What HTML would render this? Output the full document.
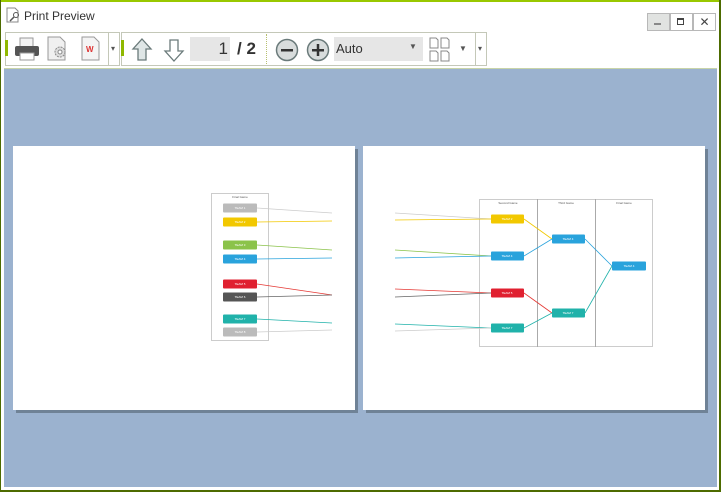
<!DOCTYPE html>
<html><head><style>
body{margin:0;width:721px;height:492px;overflow:hidden;background:#fff;font-family:"Liberation Sans",sans-serif;position:relative}
.abs{position:absolute}
</style></head><body>
<div class="abs" style="left:0;top:0;width:721px;height:2px;background:#99c800"></div>
<div class="abs" style="left:0;top:0;width:1px;height:492px;background:#4d6b00"></div>
<div class="abs" style="left:719px;top:0;width:2px;height:492px;background:#4d6b00"></div>
<div class="abs" style="left:0;top:490px;width:721px;height:2px;background:#4d6b00"></div>
<!-- title -->
<svg class="abs" style="left:6px;top:7px" width="14" height="16"><path d="M1 1h8l3 3v11H1z" fill="#fff" stroke="#888"/><circle cx="10" cy="8" r="2.5" fill="none" stroke="#555"/><path d="M8 10l-4 4" stroke="#555" stroke-width="1.5"/></svg>
<div class="abs" style="left:24px;top:9px;font-size:12px;color:#333">Print Preview</div>
<!-- window buttons -->
<div class="abs" style="left:647px;top:13px;width:21px;height:16px;background:#e1e3e1;border:1px solid #b8b8b8"></div>
<div class="abs" style="left:654px;top:23px;width:7px;height:2px;background:#888"></div>
<div class="abs" style="left:670px;top:13px;width:21px;height:16px;background:#fff;border:1px solid #b8b8b8"></div>
<div class="abs" style="left:677px;top:18px;width:5px;height:4px;border:1px solid #444;border-top-width:2px"></div>
<div class="abs" style="left:693px;top:13px;width:21px;height:16px;background:#fff;border:1px solid #b8b8b8;font-size:12px;line-height:16px;text-align:center;color:#444">✕</div>
<!-- toolbar groups -->
<div class="abs" style="left:5px;top:32px;width:113px;height:32px;border:1px solid #c4c8b8"></div>
<div class="abs" style="left:108px;top:32px;width:1px;height:34px;background:#c4c8b8"></div>
<div class="abs" style="left:121px;top:32px;width:364px;height:32px;border:1px solid #c4c8b8"></div>
<div class="abs" style="left:475px;top:32px;width:1px;height:34px;background:#c4c8b8"></div>
<div class="abs" style="left:5px;top:40px;width:3px;height:16px;background:#8fb800"></div>
<div class="abs" style="left:121px;top:40px;width:3px;height:16px;background:#8fb800"></div>
<div class="abs" style="left:111px;top:44px;font-size:8px;color:#555">▾</div>
<div class="abs" style="left:478px;top:44px;font-size:8px;color:#555">▾</div>
<!-- printer -->
<svg class="abs" style="left:13px;top:36px" width="28" height="26"><rect x="7" y="2" width="13" height="9" fill="#f4f4f4" stroke="#999"/><rect x="2" y="10" width="24" height="10" rx="2" fill="#555"/><rect x="7" y="17" width="14" height="7" fill="#fff" stroke="#999"/></svg>
<svg class="abs" style="left:46px;top:36px" width="24" height="26"><path d="M2 1h12l5 5v18H2z" fill="#f0f0f0" stroke="#999"/><circle cx="14" cy="16" r="5" fill="#ddd" stroke="#888" stroke-dasharray="2 1"/><circle cx="14" cy="16" r="2" fill="#fff" stroke="#888"/></svg>
<svg class="abs" style="left:81px;top:36px" width="20" height="26"><path d="M1 1h12l5 5v18H1z" fill="#f4f4f4" stroke="#999"/><text x="5" y="16" font-size="8" font-weight="bold" fill="#d33" font-family="Liberation Sans">W</text></svg>
<!-- arrows -->
<svg class="abs" style="left:131px;top:38px" width="22" height="24"><path d="M11 1L20 11h-5v11H7V11H2z" fill="#dfe6e6" stroke="#6a7a7a" stroke-width="1.3"/></svg>
<svg class="abs" style="left:163px;top:38px" width="22" height="24"><path d="M11 23L20 13h-5V2H7v11H2z" fill="#fff" stroke="#6a7a7a" stroke-width="1.3"/></svg>
<div class="abs" style="left:190px;top:37px;width:40px;height:24px;background:#e6e6e6"></div>
<div class="abs" style="left:190px;top:37px;width:38px;height:24px;font-size:17px;line-height:24px;text-align:right;color:#333">1</div>
<div class="abs" style="left:237px;top:37px;font-size:17px;line-height:24px;color:#333;font-weight:bold">/ 2</div>
<div class="abs" style="left:266px;top:34px;width:0;height:30px;border-left:1px dotted #b8c070"></div>
<svg class="abs" style="left:275px;top:38px" width="24" height="24"><circle cx="12" cy="12" r="10.5" fill="#d8dcdc" stroke="#6a7a7a" stroke-width="1.5"/><rect x="6" y="11" width="12" height="2.5" fill="#333"/></svg>
<svg class="abs" style="left:306px;top:38px" width="24" height="24"><circle cx="12" cy="12" r="10.5" fill="#d8dcdc" stroke="#6a7a7a" stroke-width="1.5"/><rect x="6" y="11" width="12" height="2.5" fill="#333"/><rect x="10.75" y="6" width="2.5" height="12" fill="#333"/></svg>
<div class="abs" style="left:334px;top:37px;width:89px;height:24px;background:#e6e6e6;font-size:13px;line-height:24px;color:#333;text-indent:2px">Auto</div>
<div class="abs" style="left:409px;top:42px;font-size:8px;color:#555">▼</div>
<svg class="abs" style="left:429px;top:37px" width="22" height="25"><g fill="#fff" stroke="#888"><path d="M1 1h6l2 2v8H1z"/><path d="M12 1h6l2 2v8h-8z"/><path d="M1 14h6l2 2v8H1z"/><path d="M12 14h6l2 2v8h-8z"/></g></svg>
<div class="abs" style="left:459px;top:44px;font-size:8px;color:#555">▼</div>
<!-- preview area -->
<div class="abs" style="left:4px;top:68px;width:713px;height:1px;background:#c8d4a8"></div>
<div class="abs" style="left:4px;top:69px;width:713px;height:418px;background:#9bb2cf"></div>
<div class="abs" style="left:16px;top:149px;width:342px;height:264px;background:#6f8296"></div>
<div class="abs" style="left:366px;top:149px;width:342px;height:264px;background:#6f8296"></div>
<svg class="abs" style="left:0;top:0" width="721" height="492" font-family="Liberation Sans">
<rect x="13" y="146" width="342" height="264" fill="#fff"/>
<rect x="363" y="146" width="342" height="264" fill="#fff"/>
<rect x="211.5" y="193.5" width="57" height="147" fill="none" stroke="#ccc"/>
<text x="240" y="198" font-size="3" text-anchor="middle" fill="#555">Final Game</text>
<g stroke-width="0.8" fill="none">
<path d="M257 208L332 213" stroke="#ccc"/><path d="M257 222L332 221" stroke="#f2c800"/>
<path d="M257 245L332 250" stroke="#8bc34a"/><path d="M257 259L332 258" stroke="#29a3dc"/>
<path d="M257 284L332 295" stroke="#e53935"/><path d="M257 297L332 295" stroke="#666"/>
<path d="M257 319L332 323" stroke="#20b2aa"/><path d="M257 332L332 330" stroke="#ccc"/>
</g>
<g>
<rect x="223" y="203.5" width="34" height="9" rx="1" fill="#bbb"/><rect x="223" y="217.5" width="34" height="9" rx="1" fill="#f2c800"/>
<rect x="223" y="240.5" width="34" height="9" rx="1" fill="#8bc34a"/><rect x="223" y="254.5" width="34" height="9" rx="1" fill="#29a3dc"/>
<rect x="223" y="279.5" width="34" height="9" rx="1" fill="#e02030"/><rect x="223" y="292.5" width="34" height="9" rx="1" fill="#555"/>
<rect x="223" y="314.5" width="34" height="9" rx="1" fill="#20b2aa"/><rect x="223" y="327.5" width="34" height="9" rx="1" fill="#bbb"/>
</g>
<rect x="479.5" y="199.5" width="173" height="147" fill="none" stroke="#ccc"/>
<line x1="537.5" y1="199" x2="537.5" y2="347" stroke="#aaa"/><line x1="595.5" y1="199" x2="595.5" y2="347" stroke="#aaa"/>
<text x="508" y="204" font-size="3" text-anchor="middle" fill="#555">Second Game</text>
<text x="566" y="204" font-size="3" text-anchor="middle" fill="#555">Third Game</text>
<text x="624" y="204" font-size="3" text-anchor="middle" fill="#555">Final Game</text>
<g stroke-width="0.8" fill="none">
<path d="M395 213L491 219" stroke="#ccc"/><path d="M395 220L491 219" stroke="#f2c800"/>
<path d="M395 250L491 256" stroke="#8bc34a"/><path d="M395 258L491 256" stroke="#29a3dc"/>
<path d="M395 289L491 293" stroke="#e53935"/><path d="M395 297L491 293" stroke="#666"/>
<path d="M395 324L491 328" stroke="#20b2aa"/><path d="M395 331L491 328" stroke="#ccc"/>
<path d="M524 219L552 239" stroke="#f2c800"/><path d="M524 256L552 239" stroke="#29a3dc"/>
<path d="M524 293L552 313" stroke="#e53935"/><path d="M524 328L552 313" stroke="#20b2aa"/>
<path d="M585 239L612 266" stroke="#29a3dc"/><path d="M585 313L612 266" stroke="#20b2aa"/>
</g>
<rect x="491" y="214.5" width="33" height="9" rx="1" fill="#f2c800"/>
<rect x="491" y="251.5" width="33" height="9" rx="1" fill="#29a3dc"/>
<rect x="491" y="288.5" width="33" height="9" rx="1" fill="#e02030"/>
<rect x="491" y="323.5" width="33" height="9" rx="1" fill="#20b2aa"/>
<rect x="552" y="234.5" width="33" height="9" rx="1" fill="#29a3dc"/>
<rect x="552" y="308.5" width="33" height="9" rx="1" fill="#20b2aa"/>
<rect x="612" y="261.5" width="34" height="9" rx="1" fill="#29a3dc"/>
<g font-size="3" fill="#fff" text-anchor="middle">
<text x="240" y="209">TEAM 1</text><text x="240" y="223">TEAM 2</text><text x="240" y="246">TEAM 3</text><text x="240" y="260">TEAM 4</text>
<text x="240" y="285">TEAM 5</text><text x="240" y="298">TEAM 6</text><text x="240" y="320">TEAM 7</text><text x="240" y="333">TEAM 8</text>
<text x="507" y="220">TEAM 2</text><text x="507" y="257">TEAM 4</text><text x="507" y="294">TEAM 5</text><text x="507" y="329">TEAM 7</text>
<text x="568" y="240">TEAM 4</text><text x="568" y="314">TEAM 7</text><text x="629" y="267">TEAM 4</text>
</g>
</svg>
</body></html>
